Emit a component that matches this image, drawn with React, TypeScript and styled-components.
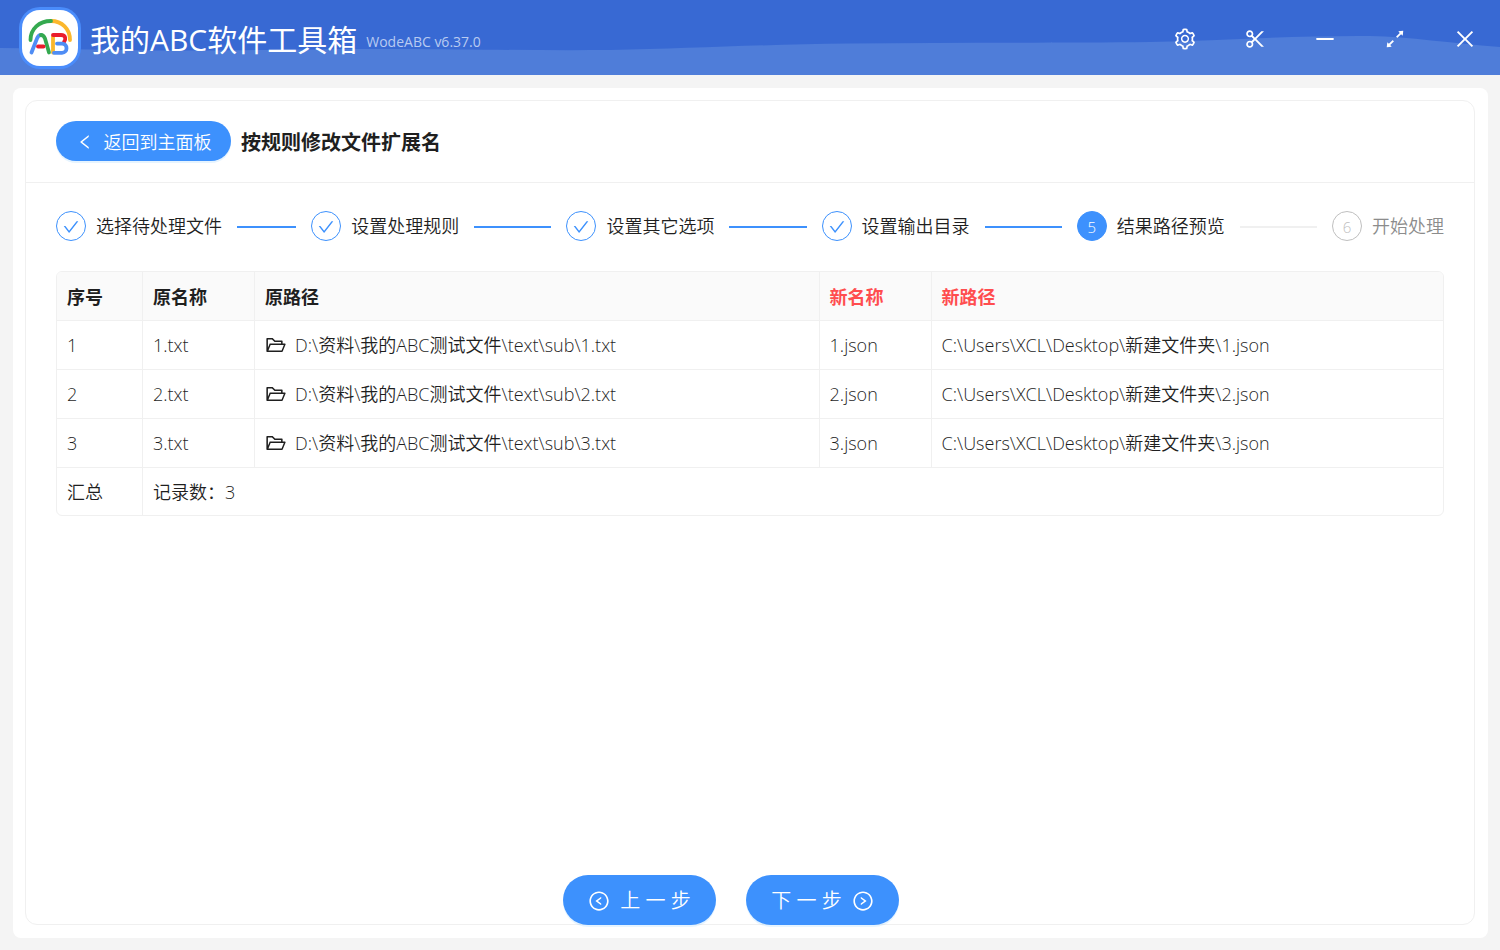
import React from "react";
import styled, { createGlobalStyle } from "styled-components";
import {
  AiOutlineArrowsAlt,
  AiOutlineCheck,
  AiOutlineClose,
  AiOutlineFolderOpen,
  AiOutlineLeft,
  AiOutlineLeftCircle,
  AiOutlineMinus,
  AiOutlineRightCircle,
  AiOutlineScissor,
  AiOutlineSetting,
} from "react-icons/ai";

const blue = "#3d91fd";
const line = "#f0f0f0";
const ink = "#1f1f1f";

const GlobalStyle = createGlobalStyle`
  * { box-sizing: border-box; }
  body {
    margin: 0;
    background: #f4f4f4;
    color: ${ink};
    font-family: "Open Sans", "Noto Sans CJK SC", sans-serif;
    font-size: 18px;
    font-weight: 350;
    line-height: 28px;
  }
  button { font: inherit; border: 0; cursor: pointer; }
`;

const Page = styled.div`
  display: flex;
  flex-direction: column;
  min-height: 100vh;
`;

const TitleBar = styled.header`
  position: relative;
  display: flex;
  align-items: center;
  height: 75px;
  padding-left: 22px;
  background: #3869d3;
  color: #fff;
`;

const Wave = styled.svg`
  position: absolute;
  inset: 0;
  width: 100%;
  height: 100%;
`;

const LogoBox = styled.span`
  position: relative;
  display: flex;
  width: 56px;
  height: 56px;
  border-radius: 18px;
  background: #fff;
  box-shadow: 0 0 0 3px #4a8cfb;
`;

const AppName = styled.h1`
  position: relative;
  margin: 0 0 0 12px;
  padding-top: 4px;
  font-size: 30px;
  font-weight: 400;
  line-height: 40px;
`;

const Version = styled.span`
  position: relative;
  flex: 1;
  margin-left: 9px;
  padding-top: 8px;
  color: #b9cbf1;
  font-size: 14px;
  font-weight: 400;
  line-height: 20px;
`;

const WindowControls = styled.div`
  position: relative;
  display: flex;
  align-self: stretch;
`;

const WindowButton = styled.button`
  display: flex;
  align-items: center;
  justify-content: center;
  width: 70px;
  padding: 3px 0 0;
  background: none;
  color: #fff;
  font-size: 24px;
`;

const Sheet = styled.main`
  display: flex;
  flex: 1;
  margin: 13px 12px 12px 13px;
  padding: 12px 13px 13px 12px;
  border-radius: 8px;
  background: #fff;
`;

const Card = styled.section`
  display: flex;
  flex: 1;
  flex-direction: column;
  min-width: 0;
  border: 1px solid ${line};
  border-radius: 12px;
`;

const CardHead = styled.div`
  display: flex;
  align-items: center;
  gap: 10px;
  padding: 20px 30px 21px;
  border-bottom: 1px solid ${line};
`;

const PillButton = styled.button<{ $large?: boolean }>`
  display: inline-flex;
  align-items: center;
  justify-content: center;
  gap: 10px;
  min-width: ${(p) => (p.$large ? 153 : 175)}px;
  height: ${(p) => (p.$large ? 50 : 40)}px;
  padding: 2px 18px 0;
  border-radius: 25px;
  background: ${blue};
  box-shadow: 0 2px 0 rgba(5, 145, 255, 0.1);
  color: #fff;
  font-size: ${(p) => (p.$large ? 20 : 18)}px;

  svg {
    font-size: ${(p) => (p.$large ? 22 : 18)}px;
  }
`;

const TaskTitle = styled.h2`
  margin: 0;
  padding-top: 4px;
  font-size: 20px;
  font-weight: 700;
  line-height: 30px;
`;

const CardBody = styled.div`
  flex: 1;
  padding: 28px 30px;
`;

const Steps = styled.ol`
  display: flex;
  margin: 0 0 30px;
  padding: 0;
  list-style: none;
`;

type StepState = "done" | "current" | "waiting";

const Step = styled.li<{ $state: StepState }>`
  display: flex;
  flex: 1 1 0;
  align-items: center;
  color: ${(p) => (p.$state === "waiting" ? "#8c8c8c" : ink)};
  white-space: nowrap;

  &:last-child {
    flex: none;
  }

  &:not(:last-child)::after {
    content: "";
    flex: 1;
    height: 2px;
    margin: 2px 15px 0;
    background: ${(p) => (p.$state === "done" ? blue : line)};
  }
`;

const StepMark = styled.span<{ $state: StepState }>`
  display: flex;
  align-items: center;
  justify-content: center;
  width: 30px;
  height: 30px;
  margin-right: 10px;
  padding-top: 2px;
  border: 1px solid ${(p) => (p.$state === "waiting" ? "#bfbfbf" : blue)};
  border-radius: 50%;
  background: ${(p) => (p.$state === "current" ? blue : "#fff")};
  color: ${(p) => ({ done: blue, current: "#fff", waiting: "#bfbfbf" })[p.$state]};
  font-size: 15px;

  svg {
    font-size: 18px;
  }
`;

const TableFrame = styled.div`
  overflow: hidden;
  border: 1px solid ${line};
  border-radius: 6px;
`;

const Table = styled.table`
  width: 100%;
  border-spacing: 0;
  table-layout: fixed;
  text-align: left;

  tfoot td {
    padding-bottom: 9px;
    border-bottom: 0;
  }
`;

const Col = styled.col<{ $width?: string }>`
  width: ${(p) => p.$width ?? "auto"};
`;

const HeadCell = styled.th<{ $fresh?: boolean }>`
  padding: 11px 10px 9px;
  border-right: 1px solid ${line};
  border-bottom: 1px solid ${line};
  background: #fafafa;
  color: ${(p) => (p.$fresh ? "#ff4d4f" : ink)};
  font-weight: 700;

  &:last-child {
    border-right: 0;
  }
`;

const Cell = styled.td`
  padding: 10px;
  border-right: 1px solid ${line};
  border-bottom: 1px solid ${line};

  &:last-child {
    border-right: 0;
  }
`;

const PathText = styled.span`
  display: flex;
  align-items: center;
  gap: 8px;

  svg {
    font-size: 22px;
  }
`;

const Footer = styled.div`
  display: flex;
  justify-content: center;
  gap: 30px;
  margin-bottom: -1px;
  padding-right: 38px;
`;

const steps: { label: string; state: StepState }[] = [
  { label: "选择待处理文件", state: "done" },
  { label: "设置处理规则", state: "done" },
  { label: "设置其它选项", state: "done" },
  { label: "设置输出目录", state: "done" },
  { label: "结果路径预览", state: "current" },
  { label: "开始处理", state: "waiting" },
];

const records = [1, 2, 3].map((n) => ({
  id: n,
  name: `${n}.txt`,
  path: `D:\\资料\\我的ABC测试文件\\text\\sub\\${n}.txt`,
  newName: `${n}.json`,
  newPath: `C:\\Users\\XCL\\Desktop\\新建文件夹\\${n}.json`,
}));

const controls = [
  { label: "设置", Icon: AiOutlineSetting },
  { label: "截图", Icon: AiOutlineScissor },
  { label: "最小化", Icon: AiOutlineMinus },
  { label: "最大化", Icon: AiOutlineArrowsAlt },
  { label: "关闭", Icon: AiOutlineClose },
];

function Logo() {
  return (
    <LogoBox>
      <svg width="56" height="56" viewBox="0 0 56 56" fill="none" strokeWidth="3.8" strokeLinecap="round" strokeLinejoin="round" aria-hidden="true">
        <path d="M48 30C48 19 40 11 29 11" stroke="#fbb72c" />
        <path d="M8.500 30C8.500 19 17 11 29 11" stroke="#34a94f" />
        <path d="M9.500 42.500L15 28.500C16 26 17.300 25 19 25" stroke="#4f8df5" />
        <path d="M19 25C21 25 22 26 23 28.500L27 42.500" stroke="#34a94f" />
        <path d="M16 36.500H21.500" stroke="#ea1c2c" />
        <path d="M31 26V42.500" stroke="#fbb72c" />
        <path d="M31 25H39C44 25 44 29.500 42 32" stroke="#ea1c2c" />
        <path d="M35 33.600H40C46 33.600 46 42.800 40 42.800H32" stroke="#4f8df5" />
      </svg>
    </LogoBox>
  );
}

export default function App() {
  return (
    <Page>
      <GlobalStyle />
      <TitleBar>
        <Wave viewBox="0 0 1500 75" preserveAspectRatio="none" aria-hidden="true">
          <path
            d="M0 48C70 49 130 51 200 50.500C290 50 330 48.500 400 49C480 49.500 540 50.500 610 50C690 48.500 760 44.500 850 43.500C950 42.500 1060 43 1150 42C1220 40.500 1290 35.500 1370 36C1410 37 1450 43 1500 47V75H0Z"
            fill="#4f7dd9"
          />
        </Wave>
        <Logo />
        <AppName>我的ABC软件工具箱</AppName>
        <Version>WodeABC v6.37.0</Version>
        <WindowControls>
          {controls.map(({ label, Icon }) => (
            <WindowButton key={label} type="button" aria-label={label}>
              <Icon />
            </WindowButton>
          ))}
        </WindowControls>
      </TitleBar>
      <Sheet>
        <Card>
          <CardHead>
            <PillButton type="button">
              <AiOutlineLeft />
              返回到主面板
            </PillButton>
            <TaskTitle>按规则修改文件扩展名</TaskTitle>
          </CardHead>
          <CardBody>
            <Steps>
              {steps.map(({ label, state }, i) => (
                <Step key={label} $state={state} aria-current={state === "current" ? "step" : undefined}>
                  <StepMark $state={state}>{state === "done" ? <AiOutlineCheck /> : i + 1}</StepMark>
                  {label}
                </Step>
              ))}
            </Steps>
            <TableFrame>
              <Table>
                <colgroup>
                  <Col $width="86px" />
                  <Col $width="112px" />
                  <Col />
                  <Col $width="112px" />
                  <Col $width="36.9%" />
                </colgroup>
                <thead>
                  <tr>
                    <HeadCell scope="col">序号</HeadCell>
                    <HeadCell scope="col">原名称</HeadCell>
                    <HeadCell scope="col">原路径</HeadCell>
                    <HeadCell scope="col" $fresh>新名称</HeadCell>
                    <HeadCell scope="col" $fresh>新路径</HeadCell>
                  </tr>
                </thead>
                <tbody>
                  {records.map((r) => (
                    <tr key={r.id}>
                      <Cell>{r.id}</Cell>
                      <Cell>{r.name}</Cell>
                      <Cell>
                        <PathText>
                          <AiOutlineFolderOpen />
                          {r.path}
                        </PathText>
                      </Cell>
                      <Cell>{r.newName}</Cell>
                      <Cell>{r.newPath}</Cell>
                    </tr>
                  ))}
                </tbody>
                <tfoot>
                  <tr>
                    <Cell>汇总</Cell>
                    <Cell colSpan={4}>记录数：{records.length}</Cell>
                  </tr>
                </tfoot>
              </Table>
            </TableFrame>
          </CardBody>
          <Footer>
            <PillButton type="button" $large>
              <AiOutlineLeftCircle />
              上 一 步
            </PillButton>
            <PillButton type="button" $large>
              下 一 步
              <AiOutlineRightCircle />
            </PillButton>
          </Footer>
        </Card>
      </Sheet>
    </Page>
  );
}
